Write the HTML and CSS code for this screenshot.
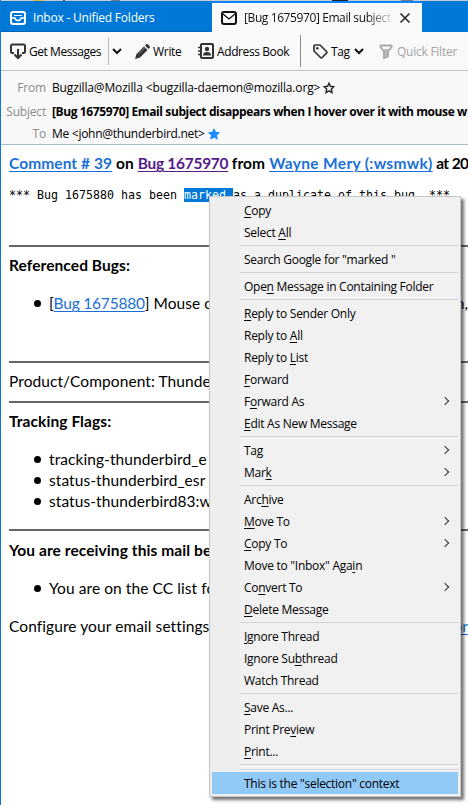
FILE: index.html
```html
<!DOCTYPE html>
<html lang="en">
<head>
<meta charset="utf-8">
<title>Inbox - Unified Folders</title>
<link rel="stylesheet" href="styles.css">
</head>
<body>
<div class="window">
  <div class="strip"></div>
  <div class="tabs">
    <div class="tab">
      <svg width="16" height="16" viewBox="0 0 16 16" fill="none" stroke="#fff" stroke-width="2"><rect x="1" y="2" width="14" height="12" rx="2"/><path d="M1 8h4c.4 2 1.300 2.500 3 2.500s2.600-.5 3-2.500h4" stroke-width="1.500"/><path d="M4 5.500h8" stroke-width="1"/></svg>
      <span class="t-inbox">Inbox - Unified Folders</span>
    </div>
    <div class="tab active">
      <svg width="16" height="16" viewBox="0 0 16 16" fill="none" stroke="#111" stroke-width="2"><rect x="1" y="2" width="14" height="12" rx="2"/><path d="M2 4l6 5 6-5" stroke-width="1.300"/></svg>
      <span class="t-bug">[Bug 1675970] Email subject</span>
      <svg class="close" width="12" height="12" viewBox="0 0 12 12" stroke="#222" stroke-width="1.500"><path d="M1.500 1.500l9 9M10.500 1.500l-9 9"/></svg>
    </div>
  </div>
  <div class="toolbar">
    <svg class="i-get" width="18" height="18" viewBox="0 0 18 18" fill="none" stroke="#333" stroke-width="2"><path d="M5 11H3.500A1.500 1.500 0 0 1 2 9.500V4a1.500 1.500 0 0 1 1.500-1.500h11A1.500 1.500 0 0 1 16 4v5.500a1.500 1.500 0 0 1-1.500 1.500H13M9 7v9M5.500 12.500L9 16l3.500-3.500"/></svg>
    <span class="l-get">Get Messages</span>
    <i class="split"></i>
    <svg class="i-chev" width="10" height="8" viewBox="0 0 10 8" fill="none" stroke="#111" stroke-width="2"><path d="M1 2l4 4 4-4"/></svg>
    <svg class="i-write" width="15" height="15" viewBox="0 0 15 15" fill="#333"><path d="M0 15l1.500-5L9 2.500 12.500 6 5 13.500zM10 1.500l1-1c.6-.6 1.400-.6 2 0l1.500 1.500c.6.6.6 1.400 0 2l-1 1z"/><path d="M3.500 10l6-6" stroke="#999" stroke-width=".8"/></svg>
    <span class="l-write">Write</span>
    <svg class="i-book" width="16" height="16" viewBox="0 0 16 16" fill="none" stroke="#333" stroke-width="2"><rect x="3" y="1" width="12" height="14" rx="1"/><path d="M0 4.500h3M0 8h3M0 11.500h3" stroke-width="1.500"/><circle cx="9" cy="6" r="2.200" fill="#333" stroke="none"/><path d="M5 12.500c0-2.500 1.500-3.500 4-3.500s4 1 4 3.500z" fill="#333" stroke="none"/></svg>
    <span class="l-book">Address Book</span>
    <i class="rule"></i>
    <svg class="i-tag" width="15" height="15" viewBox="0 0 15 15" fill="none" stroke="#333" stroke-width="1.700"><path d="M1 2.200C1 1.500 1.500 1 2.200 1H7l6.500 6.500c.6.6.6 1.100 0 1.700l-4.300 4.300c-.6.6-1.100.6-1.700 0L1 7z" stroke-linejoin="round"/><circle cx="4.300" cy="4.300" r="1.300" fill="#333" stroke="none"/></svg>
    <span class="l-tag">Tag</span>
    <svg class="i-chev2" width="10" height="8" viewBox="0 0 10 8" fill="none" stroke="#111" stroke-width="2"><path d="M1 2l4 4 4-4"/></svg>
    <svg class="i-filter" width="14" height="15" viewBox="0 0 14 15" fill="none" stroke="#aaa" stroke-width="2"><path d="M1.500 1.500h11V3L9 7.500v4.800L5 14V7.500L1.500 3z" stroke-linejoin="round"/><path d="M4 5h6L8 8v4l-2 1V8z" fill="#bbb" stroke="none"/></svg>
    <span class="l-filter">Quick Filter</span>
  </div>
  <div class="headers">
    <div class="hrow from"><span class="key">From</span><span class="v-from">Bugzilla@Mozilla &lt;bugzilla-daemon@mozilla.org&gt;</span><svg width="12" height="12" viewBox="0 0 12 12" fill="#fff" stroke="#222" stroke-width="1.400"><path d="M6 1.200l1.400 3.100 3.400.4-2.500 2.300.7 3.600L6 8.900l-3 1.700.7-3.600L1.200 4.700l3.400-.4z"/></svg></div>
    <div class="hrow subj"><span class="key">Subject</span><b class="v-subj">[Bug 1675970] Email subject disappears when I hover over it with mouse w</b></div>
    <div class="hrow to"><span class="key">To</span><span class="v-to">Me &lt;john@thunderbird.net&gt;</span><svg width="12" height="12" viewBox="0 0 12 12" fill="#1a8cff" stroke="#1a8cff"><path d="M6 .8l1.500 3.500 3.800.4-2.800 2.500.8 3.800L6 9.100 2.700 11l.8-3.800L.7 4.700l3.800-.4z"/></svg></div>
  </div>
  <div class="message">
    <h1><a class="w-comment">Comment # 39</a><span class="w-on">on</span><a class="seen w-bug">Bug 1675970</a><span class="w-from">from</span><a class="w-wayne">Wayne Mery (:wsmwk)</a><span class="w-at">at 20</span></h1>
    <pre>*** Bug 1675880 has been <mark>marked </mark>as a duplicate of this bug. ***</pre>
    <hr>
    <h2 class="b-ref">Referenced Bugs:</h2>
    <ul class="refs"><li><span><span class="num">[<a>Bug 1675880</a>]</span> Mouse o</span><span class="tail">n,</span></li></ul>
    <hr>
    <p class="product">Product/Component: Thunde</p>
    <hr>
    <h2 class="b-track">Tracking Flags:</h2>
    <ul class="flags"><li>tracking-thunderbird_e</li><li>status-thunderbird_esr</li><li>status-thunderbird83:w</li></ul>
    <hr>
    <h2 class="b-you">You are receiving this mail be</h2>
    <ul class="cc"><li>You are on the CC list fo</li></ul>
    <p class="configure"><span>Configure your email settings</span><a class="tail2">or</a></p>
  </div>
</div>
<div class="menu">
  <div class="item"><u>C</u>opy</div>
  <div class="item">Select <u>A</u>ll</div>
  <div class="sep"></div>
  <div class="item">Search Google for "marked "</div>
  <div class="sep"></div>
  <div class="item">Ope<u>n</u> Message in Containing Folder</div>
  <div class="sep"></div>
  <div class="item"><u>R</u>eply to Sender Only</div>
  <div class="item">Reply to <u>A</u>ll</div>
  <div class="item">Reply to <u>L</u>ist</div>
  <div class="item"><u>F</u>orward</div>
  <div class="item sub">F<u>o</u>rward As</div>
  <div class="item"><u>E</u>dit As New Message</div>
  <div class="sep"></div>
  <div class="item sub">Ta<u>g</u></div>
  <div class="item sub">Mar<u>k</u></div>
  <div class="sep"></div>
  <div class="item">Arc<u>h</u>ive</div>
  <div class="item sub"><u>M</u>ove To</div>
  <div class="item sub"><u>C</u>opy To</div>
  <div class="item">Move to "Inbox" Aga<u>i</u>n</div>
  <div class="item sub">Co<u>n</u>vert To</div>
  <div class="item"><u>D</u>elete Message</div>
  <div class="sep"></div>
  <div class="item"><u>I</u>gnore Thread</div>
  <div class="item">Ignore Su<u>b</u>thread</div>
  <div class="item">Watch Thread</div>
  <div class="sep"></div>
  <div class="item"><u>S</u>ave As...</div>
  <div class="item">Print Pre<u>v</u>iew</div>
  <div class="item"><u>P</u>rint...</div>
  <div class="sep"></div>
  <div class="sep"></div>
  <div class="item hot">This is the "selection" context</div>
</div>
</body>
</html>
```
FILE: styles.css
```css
* { box-sizing: border-box; }
body { margin: 0; width: 468px; height: 805px; overflow: hidden; position: relative; background: #fff; color: #000; font: 12px/16px "Open Sans", "Noto Sans", sans-serif; white-space: nowrap; }
svg { flex: none; display: block; }
.window { width: 468px; height: 805px; border-left: 1px solid #0a78d4; overflow: hidden; }
.strip { height: 1px; background: linear-gradient(90deg, #ccc 32px, #e2b84a 32px 43px, #ccc 43px 62px, #444 62px 64px, #ccc 64px 110px, #777 110px 119px, #ccc 119px 331px, #222 331px 347px, #ccc 347px 400px, #777 400px 412px, #ccc 412px); }
.tabs { display: flex; height: 31px; background: #0078d7; }
.tab { display: flex; align-items: center; width: 211px; padding: 3px 0 0 9px; color: #fff; border-bottom: 1px solid #0067b8; }
.tab .t-inbox { margin-left: 7px; letter-spacing: -.2px; }
.tab.active { width: 210px; background: #f9f9fa; color: #111; border-top: 2px solid #0a84ff; border-bottom: 0; padding-top: 1px; }
.t-bug { margin-left: 7px; width: 147px; overflow: hidden; letter-spacing: -.4px; -webkit-mask-image: linear-gradient(90deg, #000 122px, transparent 151px); }
.close { margin-left: 8px; }
.toolbar { display: flex; align-items: center; height: 39px; background: #f9f9fa; border-bottom: 1px solid #c2c2c3; }
.toolbar span { position: relative; top: 1px; }
.i-get { margin-left: 8px; }
.l-get { margin-left: 2px; width: 72px; letter-spacing: -.45px; }
.split { margin-left: 7px; width: 1px; height: 28px; background: #bbb; }
.i-chev { margin-left: 3px; }
.i-write { margin-left: 13px; }
.l-write { margin-left: 3px; width: 29px; letter-spacing: -.3px; }
.i-book { margin-left: 16px; }
.l-book { margin-left: 3px; width: 73px; letter-spacing: -.4px; }
.rule { margin-left: 10px; width: 1px; height: 32px; background: #888; }
.i-tag { margin-left: 12px; }
.l-tag { margin-left: 3px; width: 19px; letter-spacing: -.4px; }
.i-chev2 { margin-left: 4px; }
.i-filter { margin-left: 15px; }
.l-filter { margin-left: 4px; color: #a3a3a4; letter-spacing: -.25px; }
.headers { height: 74px; padding-top: 5px; background: #f8f8f8; border-bottom: 1px solid #a9bccc; }
.hrow { display: flex; align-items: center; height: 24px; }
.hrow.to { height: 20px; }
.key { width: 45px; margin-right: 6px; text-align: right; color: #8b8b8b; letter-spacing: -.2px; }
.subj .key { letter-spacing: -.2px; }
.hrow svg { margin-left: 3px; }
.v-from { letter-spacing: -.15px; }
.v-subj { letter-spacing: -.39px; }
.v-to { letter-spacing: -.28px; }
.message { padding-left: 8px; font: 15.500px/20px Lato, sans-serif; letter-spacing: .08px; }
a { color: #1a6fd8; text-decoration: underline; text-underline-offset: 2px; text-decoration-thickness: 1px; }
a.seen { color: #551a8b; }
h1, h2, p, ul, pre { margin: 0; padding: 0; font-size: 15.500px; }
h1 { display: flex; gap: 4px; height: 20px; margin-top: 8px; }
.w-comment { width: 103px; }
.w-on { width: 18px; }
.w-bug { width: 90px; letter-spacing: -.3px; }
.w-from { width: 34px; }
.w-wayne { width: 163px; letter-spacing: .33px; }
.w-at { letter-spacing: -.6px; }
.num { letter-spacing: -.2px; }
pre { margin-top: 15px; height: 14px; font: 11.630px/14px "DejaVu Sans Mono", monospace; letter-spacing: 0; }
mark { background: #0078d7; color: #fff; }
hr { height: 2px; margin: 0; border: 0; background: #666; }
pre + hr { margin-top: 43px; }
.b-ref { margin-top: 8px; }
.refs { margin-top: 18px; margin-bottom: 47px; }
li { position: relative; display: flex; justify-content: space-between; height: 21px; line-height: 21px; padding-left: 40px; }
li::before { content: ""; position: absolute; left: 25px; top: 7px; width: 7px; height: 7px; border-radius: 50%; background: #000; }
.product { margin: 8px 0 10px; }
.b-track { margin-top: 8px; }
.flags { margin: 18px 0 17px; }
.b-you { margin-top: 9px; }
.cc { margin: 18px 0 17px; }
.configure { display: flex; justify-content: space-between; }
.menu { position: absolute; left: 209px; top: 196px; width: 252px; height: 601px; padding: 2px; border: 1px solid #c5c5c5; background: linear-gradient(90deg, #eee 30px, #f1f1f1 30px); box-shadow: 3px 3px 3px rgba(0,0,0,.55); letter-spacing: -.27px; }
.item { height: 22px; line-height: 24px; padding-left: 32px; position: relative; }
.item u { text-underline-offset: 2px; text-decoration-thickness: 1px; }
.sub::after { content: ""; position: absolute; right: 10px; top: 8px; width: 5px; height: 5px; border: solid #333; border-width: 1px 1px 0 0; transform: rotate(45deg); }
.sep { height: 5px; margin-left: 28px; background: linear-gradient(#d3d3d3, #d3d3d3) 0 2px / 100% 1px no-repeat; }
.hot { background: #91c9f7; }
```
